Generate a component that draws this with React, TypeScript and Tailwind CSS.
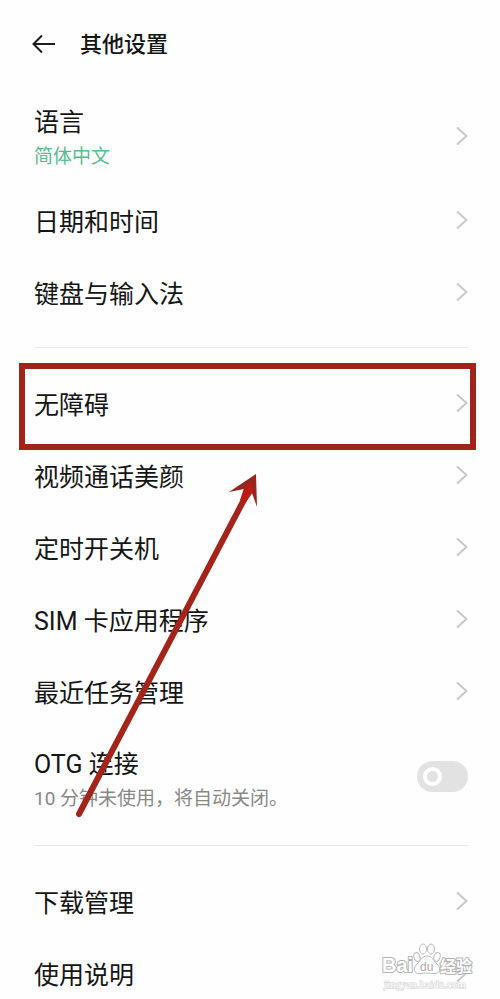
import React from "react";

function Chevron() {
  return (
    <svg viewBox="0 0 12 20" className="h-5 w-3 shrink-0" fill="none" stroke="#c9c9c9" strokeWidth="2" aria-hidden="true">
      <path d="M1 1.5 L10.5 10 L1 18.5" />
    </svg>
  );
}

function Row({ label, highlighted = false }: { label: string; highlighted?: boolean }) {
  return (
    <li className="relative">
      <button type="button" className="flex h-18 w-full items-center justify-between pr-8 pl-8.5 text-left">
        <span className="pt-1.5">{label}</span>
        <Chevron />
      </button>
      {highlighted && (
        <span className="pointer-events-none absolute -top-1 right-6 -bottom-[11px] left-[19px] border-6 border-[#9f251b]" />
      )}
    </li>
  );
}

function Divider() {
  return <hr className="my-[19px] mr-8 ml-8.5 border-t border-[#e9e9e9]" />;
}

function Pointer() {
  return (
    <svg viewBox="0 0 184 346" className="pointer-events-none absolute top-[472px] left-[76px] h-[346px] w-[184px]" aria-hidden="true">
      <path d="M3 342 L171 22" stroke="#a3241a" strokeWidth="6" strokeLinecap="round" />
      <path d="M180 2 L153 20 L168 17 L176 21 L181 35 Z" fill="#94261d" />
      <path d="M176 10 L168 16 L164 28 L170 30 L177 20 Z" fill="#b81c13" />
    </svg>
  );
}

function Watermark() {
  return (
    <svg viewBox="0 0 100 50" className="pointer-events-none absolute top-[942px] right-[26px] h-[50px] w-[100px]" role="img" aria-label="Baidu 经验">
      <g fill="#ffffff" stroke="#bcbcbc" strokeWidth="1">
        <ellipse cx="43" cy="15" rx="3" ry="4.5" transform="rotate(-18 43 15)" />
        <ellipse cx="49" cy="7" rx="3.5" ry="5" />
        <ellipse cx="57" cy="7" rx="3.5" ry="5" />
        <ellipse cx="63" cy="15" rx="3" ry="4.5" transform="rotate(18 63 15)" />
        <path d="M53 14 C48 14 47 18 44 21 C38 26 40 32 46 31.5 C50 31 56 31 60 31.5 C66 32 68 26 62 21 C59 18 58 14 53 14 Z" />
      </g>
      <g fill="#ffffff" stroke="#b2b2b2" strokeWidth="2" strokeLinejoin="round" paintOrder="stroke" className="font-['Liberation_Sans','Noto_Sans_CJK_SC',sans-serif] font-bold">
        <text x="8" y="30" fontSize="20">Bai</text>
        <text x="66" y="30" fontSize="16">经验</text>
      </g>
      <text x="46" y="29" fontSize="12" fill="#a8a8a8" className="font-['Liberation_Sans',sans-serif]">
        du
      </text>
      <text x="10" y="46" fontSize="11" fill="#ffffff" stroke="#d0d0d0" strokeWidth="1" paintOrder="stroke" className="font-['Liberation_Serif',serif]">
        jingyan.baidu.com
      </text>
    </svg>
  );
}

export default function App() {
  return (
    <main className="relative h-screen overflow-hidden bg-[#fefefe] font-[Roboto,'Noto_Sans_CJK_SC',sans-serif] text-[25px] leading-10 text-[#151515]">
      <header className="flex h-22 items-center gap-6 pl-8">
        <button type="button" aria-label="返回">
          <svg viewBox="0 0 24 20" className="h-5 w-6" fill="none" stroke="#1c1c1c" strokeWidth="2" aria-hidden="true">
            <path d="M23 10 H1.5 M10 1.5 L1.5 10 L10 18.5" />
          </svg>
        </button>
        <h1 className="pt-0.5 text-[22px] font-medium">其他设置</h1>
      </header>

      <ul>
        <li>
          <button type="button" className="flex h-24 w-full items-center justify-between pr-8 pl-8.5 text-left">
            <span className="flex flex-col pt-0.5">
              <span>语言</span>
              <span className="text-[19px] leading-7 text-[#55bd90]">简体中文</span>
            </span>
            <Chevron />
          </button>
        </li>
        <Row label="日期和时间" />
        <Row label="键盘与输入法" />
      </ul>
      <Divider />
      <ul>
        <Row label="无障碍" highlighted />
        <Row label="视频通话美颜" />
        <Row label="定时开关机" />
        <Row label="SIM 卡应用程序" />
        <Row label="最近任务管理" />
        <li>
          <label className="flex h-[99px] items-center justify-between pr-8 pl-8.5">
            <span className="flex flex-col pt-1">
              <span>OTG 连接</span>
              <span className="text-[19px] leading-7 text-[#888888]">10 分钟未使用，将自动关闭。</span>
            </span>
            <input
              type="checkbox"
              role="switch"
              className="h-[31px] w-[51px] shrink-0 appearance-none rounded-full bg-[#e2e2e2] p-1.5 before:block before:size-[19px] before:rounded-full before:border-4 before:border-white before:content-['']"
            />
          </label>
        </li>
      </ul>
      <Divider />
      <ul>
        <Row label="下载管理" />
        <Row label="使用说明" />
      </ul>
      <Pointer />
      <Watermark />
    </main>
  );
}
